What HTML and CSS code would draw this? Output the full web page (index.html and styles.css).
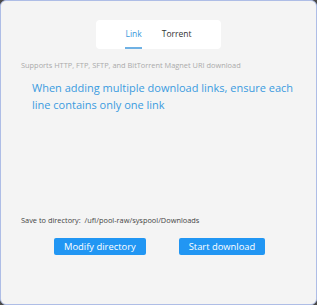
FILE: index.html
```html
<!DOCTYPE html>
<html>

<head>
    <meta charset="UTF-8">
    <title>Download</title>
    <link rel="stylesheet" href="styles.css">
</head>

<body>
    <div class="window">
        <div class="tabs">
            <span class="tab active">Link</span>
            <span class="tab">Torrent</span>
        </div>
        <p class="hint">Supports HTTP, FTP, SFTP, and BitTorrent Magnet URI download</p>
        <p class="note">When adding multiple download links, ensure each line contains only one link</p>
        <div class="spacer"></div>
        <p class="save">Save to directory:&nbsp; /ufi/pool-raw/syspool/Downloads</p>
        <div class="actions">
            <button class="btn">Modify directory</button>
            <button class="btn">Start download</button>
        </div>
    </div>
</body>

</html>
```

FILE: styles.css
```css
body {
    margin: 0;
    padding: 0;
    background: #4a4a4a;
    font-family: "Open Sans", "Noto Sans", sans-serif;
}

.window {
    width: 317px;
    height: 305px;
    box-sizing: border-box;
    border: 1px solid #aebde6;
    border-radius: 6px;
    background: #f4f4f4;
    display: flex;
    flex-direction: column;
    padding: 19px 20px 0 20px;
}

.tabs {
    align-self: center;
    width: 125px;
    height: 29px;
    box-sizing: border-box;
    background: #fff;
    border-radius: 4px;
    display: flex;
    justify-content: center;
    gap: 20px;
    padding-top: 8px;
}

.tab {
    font-size: 8.5px;
    color: #333;
    height: 21px;
    box-sizing: border-box;
}

.tab.active {
    color: #3a97db;
    border-bottom: 2px solid #6fb1e4;
}

.hint {
    margin: 11px 0 0 0;
    font-size: 7.4px;
    color: #aaa;
}

.note {
    margin: 9px 0 0 11px;
    width: 262px;
    font-size: 11px;
    line-height: 17px;
    color: #3a9be0;
}

.spacer {
    flex: 1;
}

.save {
    margin: 0;
    font-size: 7.4px;
    color: #444;
}

.actions {
    display: flex;
    gap: 33px;
    margin: 13px 0 49px 33px;
}

.btn {
    background: #2196f3;
    color: #fff;
    border: none;
    height: 17px;
    padding: 0 10px;
    border-radius: 2px;
    font-family: "Open Sans", "Noto Sans", sans-serif;
    font-size: 9.4px;
}
```
